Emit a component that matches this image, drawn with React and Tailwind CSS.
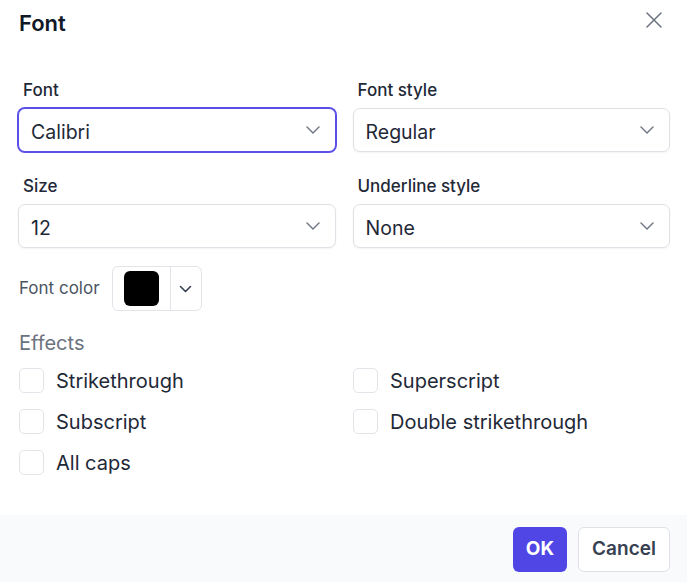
import React from "react";

function Chevron({ className = "" }) {
  return (
    <svg width="14" height="8" viewBox="0 0 14 8" fill="none" className={className}>
      <path d="M1 1l6 6 6-6" stroke="currentColor" strokeWidth="1.4" strokeLinecap="round" strokeLinejoin="round" />
    </svg>
  );
}

function Select({ label, value, focused }) {
  return (
    <div className="flex flex-col">
      <div className="pl-[5px] text-[17px] leading-6 font-medium text-[#1f2937]">{label}</div>
      <div
        className={
          "mt-[6px] h-[44px] rounded-[7px] bg-white flex items-center justify-between pl-[12px] pr-[15px] " +
          (focused
            ? "border border-[#5a4fe6] ring-1 ring-[#5a4fe6]"
            : "border border-[#dfe1e6] shadow-[0_1px_2px_rgba(0,0,0,0.05)]")
        }
      >
        <span className="text-[19.5px] leading-6 pt-[3px] text-[#1f2937]">{value}</span>
        <Chevron className="text-[#6b7280]" />
      </div>
    </div>
  );
}

function Check({ label }) {
  return (
    <div className="flex items-center h-[25px]">
      <div className="w-[25px] h-[25px] rounded-[5px] border border-[#e2e4e9] bg-white" />
      <span className="ml-[12px] text-[20px] leading-6 text-[#1f2937]">{label}</span>
    </div>
  );
}

export default function App() {
  return (
    <div className="w-[687px] h-[582px] bg-white flex flex-col font-['Inter',sans-serif]">
      <div className="flex-1">
        <div className="flex justify-between items-start pl-[19px] pr-[25px] pt-[9px]">
          <h1 className="text-[22px] leading-7 font-semibold text-[#111827]">Font</h1>
          <svg width="16" height="16" viewBox="0 0 16 16" className="mt-[3px] text-[#6b7280]" fill="none">
            <path d="M1 1l14 14M15 1L1 15" stroke="currentColor" strokeWidth="1.5" strokeLinecap="round" />
          </svg>
        </div>

        <div className="mt-[41px] pl-[18px] pr-[17px] grid grid-cols-2 gap-x-[17px] gap-y-[22px]">
          <Select label="Font" value="Calibri" focused />
          <Select label="Font style" value="Regular" />
          <Select label="Size" value="12" />
          <Select label="Underline style" value="None" />
        </div>

        <div className="mt-[18px] pl-[19px] flex items-center">
          <span className="text-[17px] text-[#4b5563]">Font color</span>
          <div className="ml-[12px] w-[90px] h-[45px] rounded-[6px] border border-[#e2e4e9] flex">
            <div className="w-[58px] flex items-center justify-center border-r border-[#e2e4e9]">
              <div className="w-[35px] h-[35px] rounded-[6px] bg-black" />
            </div>
            <div className="flex-1 flex items-center justify-center text-[#374151]">
              <svg width="13" height="8" viewBox="0 0 13 8" fill="none">
                <path d="M1.5 1.5l5 5 5-5" stroke="currentColor" strokeWidth="1.6" strokeLinecap="round" strokeLinejoin="round" />
              </svg>
            </div>
          </div>
        </div>

        <div className="mt-[18px] pl-[19px] text-[20px] leading-7 text-[#6b7280]">Effects</div>

        <div className="mt-[11px] pl-[19px] grid grid-cols-[334px_1fr] gap-y-[16px]">
          <Check label="Strikethrough" />
          <Check label="Superscript" />
          <Check label="Subscript" />
          <Check label="Double strikethrough" />
          <Check label="All caps" />
        </div>
      </div>

      <div className="h-[67px] bg-[#f9fafb] flex items-start justify-end gap-[11px] pr-[17px] pt-[12px]">
        <button className="w-[54px] h-[45px] rounded-[6px] bg-[#4f46e5] text-white text-[19px] font-bold">OK</button>
        <button className="w-[92px] h-[45px] rounded-[6px] bg-white border border-[#dfe1e6] text-[#374151] text-[19px] font-semibold">
          Cancel
        </button>
      </div>
    </div>
  );
}
